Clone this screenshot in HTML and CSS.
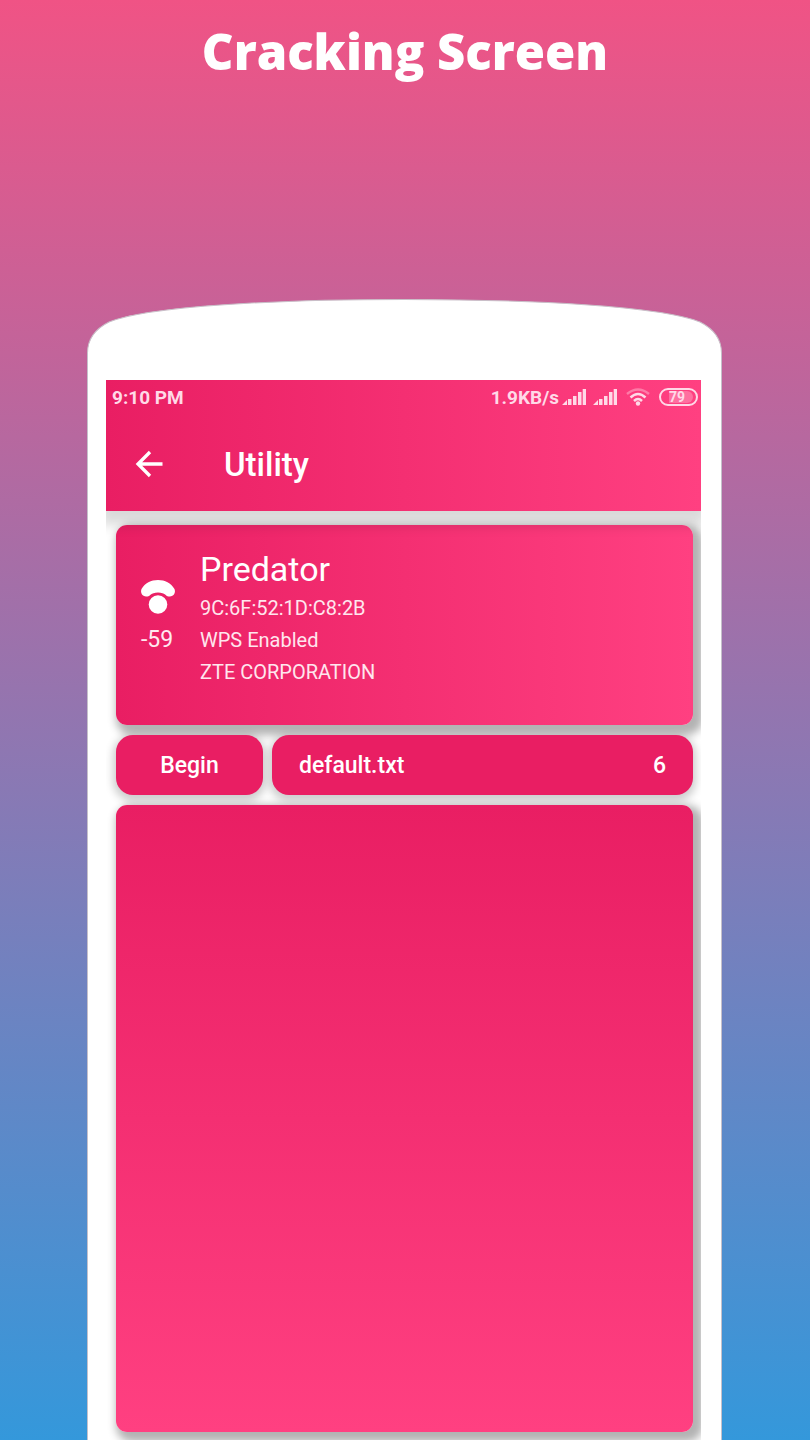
FILE: index.html
```html
<!DOCTYPE html>
<html lang="en">
<head>
<meta charset="utf-8">
<meta name="viewport" content="width=device-width, initial-scale=1">
<title>Cracking Screen</title>
<link rel="stylesheet" href="styles.css">
</head>
<body>
<h1 class="title">Cracking Screen</h1>
<main class="phone">
  <svg class="phone-cap" viewBox="0 0 634 54" preserveAspectRatio="none" aria-hidden="true">
    <path d="M0.5 54C0.5 41 8 30 22 23C62 7 190 0.5 317 0.5S572 7 612 23C626 30 633.5 41 633.5 54" fill="#fff" stroke="#c9bfc8"/>
  </svg>
  <div class="phone-body">
    <div class="screen">
      <header class="top">
        <div class="status">
          <span>9:10 PM</span>
          <div class="status-right">
            <span>1.9KB/s</span>
            <svg class="signal" width="24" height="18" viewBox="0 0 24 18" aria-hidden="true"><path d="M0 17L5 12V17ZM6 11H9.500V17H6ZM11 8H14.500V17H11ZM16 4H19.500V17H16ZM20.700 1H24V17H20.700Z" fill="currentColor"/></svg>
            <svg class="signal second" width="24" height="18" viewBox="0 0 24 18" aria-hidden="true"><path d="M0 17L5 12V17ZM6 11H9.500V17H6ZM11 8H14.500V17H11ZM16 4H19.500V17H16ZM20.700 1H24V17H20.700Z" fill="currentColor"/></svg>
            <svg class="wifi" width="24" height="18" viewBox="0 0 24 18" fill="none" stroke="currentColor" stroke-width="2.500" aria-hidden="true"><path d="M1 6Q12-3 23 6" opacity=".4"/><path d="M4.500 9.500Q12 2.500 19.500 9.500M8 13Q12 9 16 13"/><circle cx="12" cy="15.500" r="2.200" fill="currentColor" stroke="none"/></svg>
            <span class="battery"><span class="level">79</span></span>
          </div>
        </div>
        <div class="appbar">
          <button class="back" type="button" aria-label="Back">
            <svg width="28" height="28" viewBox="0 0 28 28" fill="none" stroke="currentColor" stroke-width="3.300" aria-hidden="true"><path d="M27.500 14H3M15 2L3 14L15 26"/></svg>
          </button>
          <h2 class="heading">Utility</h2>
        </div>
      </header>
      <div class="content">
        <section class="network">
          <div class="strength">
            <svg width="34" height="34" viewBox="0 0 34 34" fill="currentColor" aria-hidden="true"><path d="M0.500 9C4 3 10 0 17 0S30 3 33.500 9C35 13 32.500 16.500 29 16.500H27.500C25 16.500 24.500 12.500 17 12.500S9 16.500 6.500 16.500H5C1.500 16.500-1 13 0.500 9Z"/><circle cx="17" cy="24.500" r="9.300"/></svg>
            <span>-59</span>
          </div>
          <div class="details">
            <h3 class="name">Predator</h3>
            <p>9C:6F:52:1D:C8:2B</p>
            <p>WPS Enabled</p>
            <p>ZTE CORPORATION</p>
          </div>
        </section>
        <div class="actions">
          <button class="action begin" type="button">Begin</button>
          <button class="action file" type="button"><span>default.txt</span><span>6</span></button>
        </div>
        <section class="console" aria-label="Output"></section>
      </div>
    </div>
  </div>
</main>
</body>
</html>
```
FILE: styles.css
```css
* {
  box-sizing: border-box;
}

body {
  margin: 0;
  min-height: 100vh;
  display: flex;
  flex-direction: column;
  background: linear-gradient(#f05385, #3498db);
  font-family: Roboto, sans-serif;
  color: #fff;
}

h1, h2, h3, p {
  margin: 0;
}

.title {
  padding-top: 16px;
  height: 299px;
  font: 800 49px/70px "Open Sans", sans-serif;
  text-align: center;
}

.phone {
  flex: 1;
  display: flex;
  flex-direction: column;
  margin: 0 88px 0 87px;
}

.phone-cap {
  display: block;
  width: 100%;
  height: 54px;
}

.phone-body {
  flex: 1;
  display: flex;
  padding: 27px 20px 0 18px;
  background: #fff;
  border: solid #c5c0ca;
  border-width: 0 1px;
}

.screen {
  flex: 1;
  display: flex;
  flex-direction: column;
  overflow: hidden;
}

.top {
  position: relative;
  height: 131px;
  background: linear-gradient(90deg, #e91e63, #ff4081);
  box-shadow: 0 8px 12px 6px rgba(0, 0, 0, .15);
}

.status {
  display: flex;
  justify-content: space-between;
  align-items: center;
  height: 34px;
  padding: 0 3px 0 6px;
  font-size: 19px;
  font-weight: 700;
  color: #ffd9e7;
}

.status-right {
  display: flex;
  align-items: center;
}

.signal {
  margin-left: 3px;
}

.signal.second {
  margin-left: 7px;
}

.wifi {
  margin: 0 9px;
}

.battery {
  display: flex;
  width: 39px;
  height: 18px;
  padding: 1px 3px 1px 8px;
  border: 2px solid currentColor;
  border-radius: 9px;
}

.level {
  flex: 1;
  border-radius: 0 6px 6px 0;
  background: rgba(255, 255, 255, .25);
  font-size: 14px;
  font-weight: 700;
  line-height: 12px;
}

.appbar {
  display: flex;
  align-items: center;
  height: 100px;
  padding-left: 29px;
}

.back {
  display: flex;
  width: 89px;
  padding: 0;
  border: 0;
  background: none;
  color: #fff;
}

.heading {
  font-size: 33px;
  font-weight: 500;
}

.content {
  flex: 1;
  display: flex;
  flex-direction: column;
  gap: 10px;
  padding: 14px 8px 8px 10px;
}

.network,
.console {
  border-radius: 11px;
  box-shadow: 5px 5px 8px 5px rgba(0, 0, 0, .3);
}

.network {
  display: flex;
  height: 200px;
  padding: 24px 25px;
  background: linear-gradient(90deg, #e91e63, #ff4081);
}

.strength {
  display: flex;
  flex-direction: column;
  gap: 10px;
  width: 59px;
  padding-top: 31px;
  font-size: 23px;
  line-height: 32px;
  color: #ffe9f0;
}

.strength svg {
  color: #fff;
}

.details {
  font-size: 20px;
  line-height: 32px;
  color: #ffe6ee;
}

.name {
  font-size: 34px;
  font-weight: 400;
  line-height: 40px;
  padding-bottom: 3px;
  color: #fff;
}

.actions {
  display: flex;
  gap: 9px;
}

.action {
  height: 60px;
  padding-top: 2px;
  border: 0;
  border-radius: 17px;
  background: #e91e63;
  box-shadow: 0 3px 8px 3px rgba(0, 0, 0, .2);
  font: 500 23px/28px Roboto, sans-serif;
  color: #fff;
}

.begin {
  width: 147px;
}

.file {
  flex: 1;
  display: flex;
  align-items: center;
  justify-content: space-between;
  padding: 2px 27px 0;
}

.console {
  flex: 1;
  background: linear-gradient(#e91e63, #ff4081);
}
```
